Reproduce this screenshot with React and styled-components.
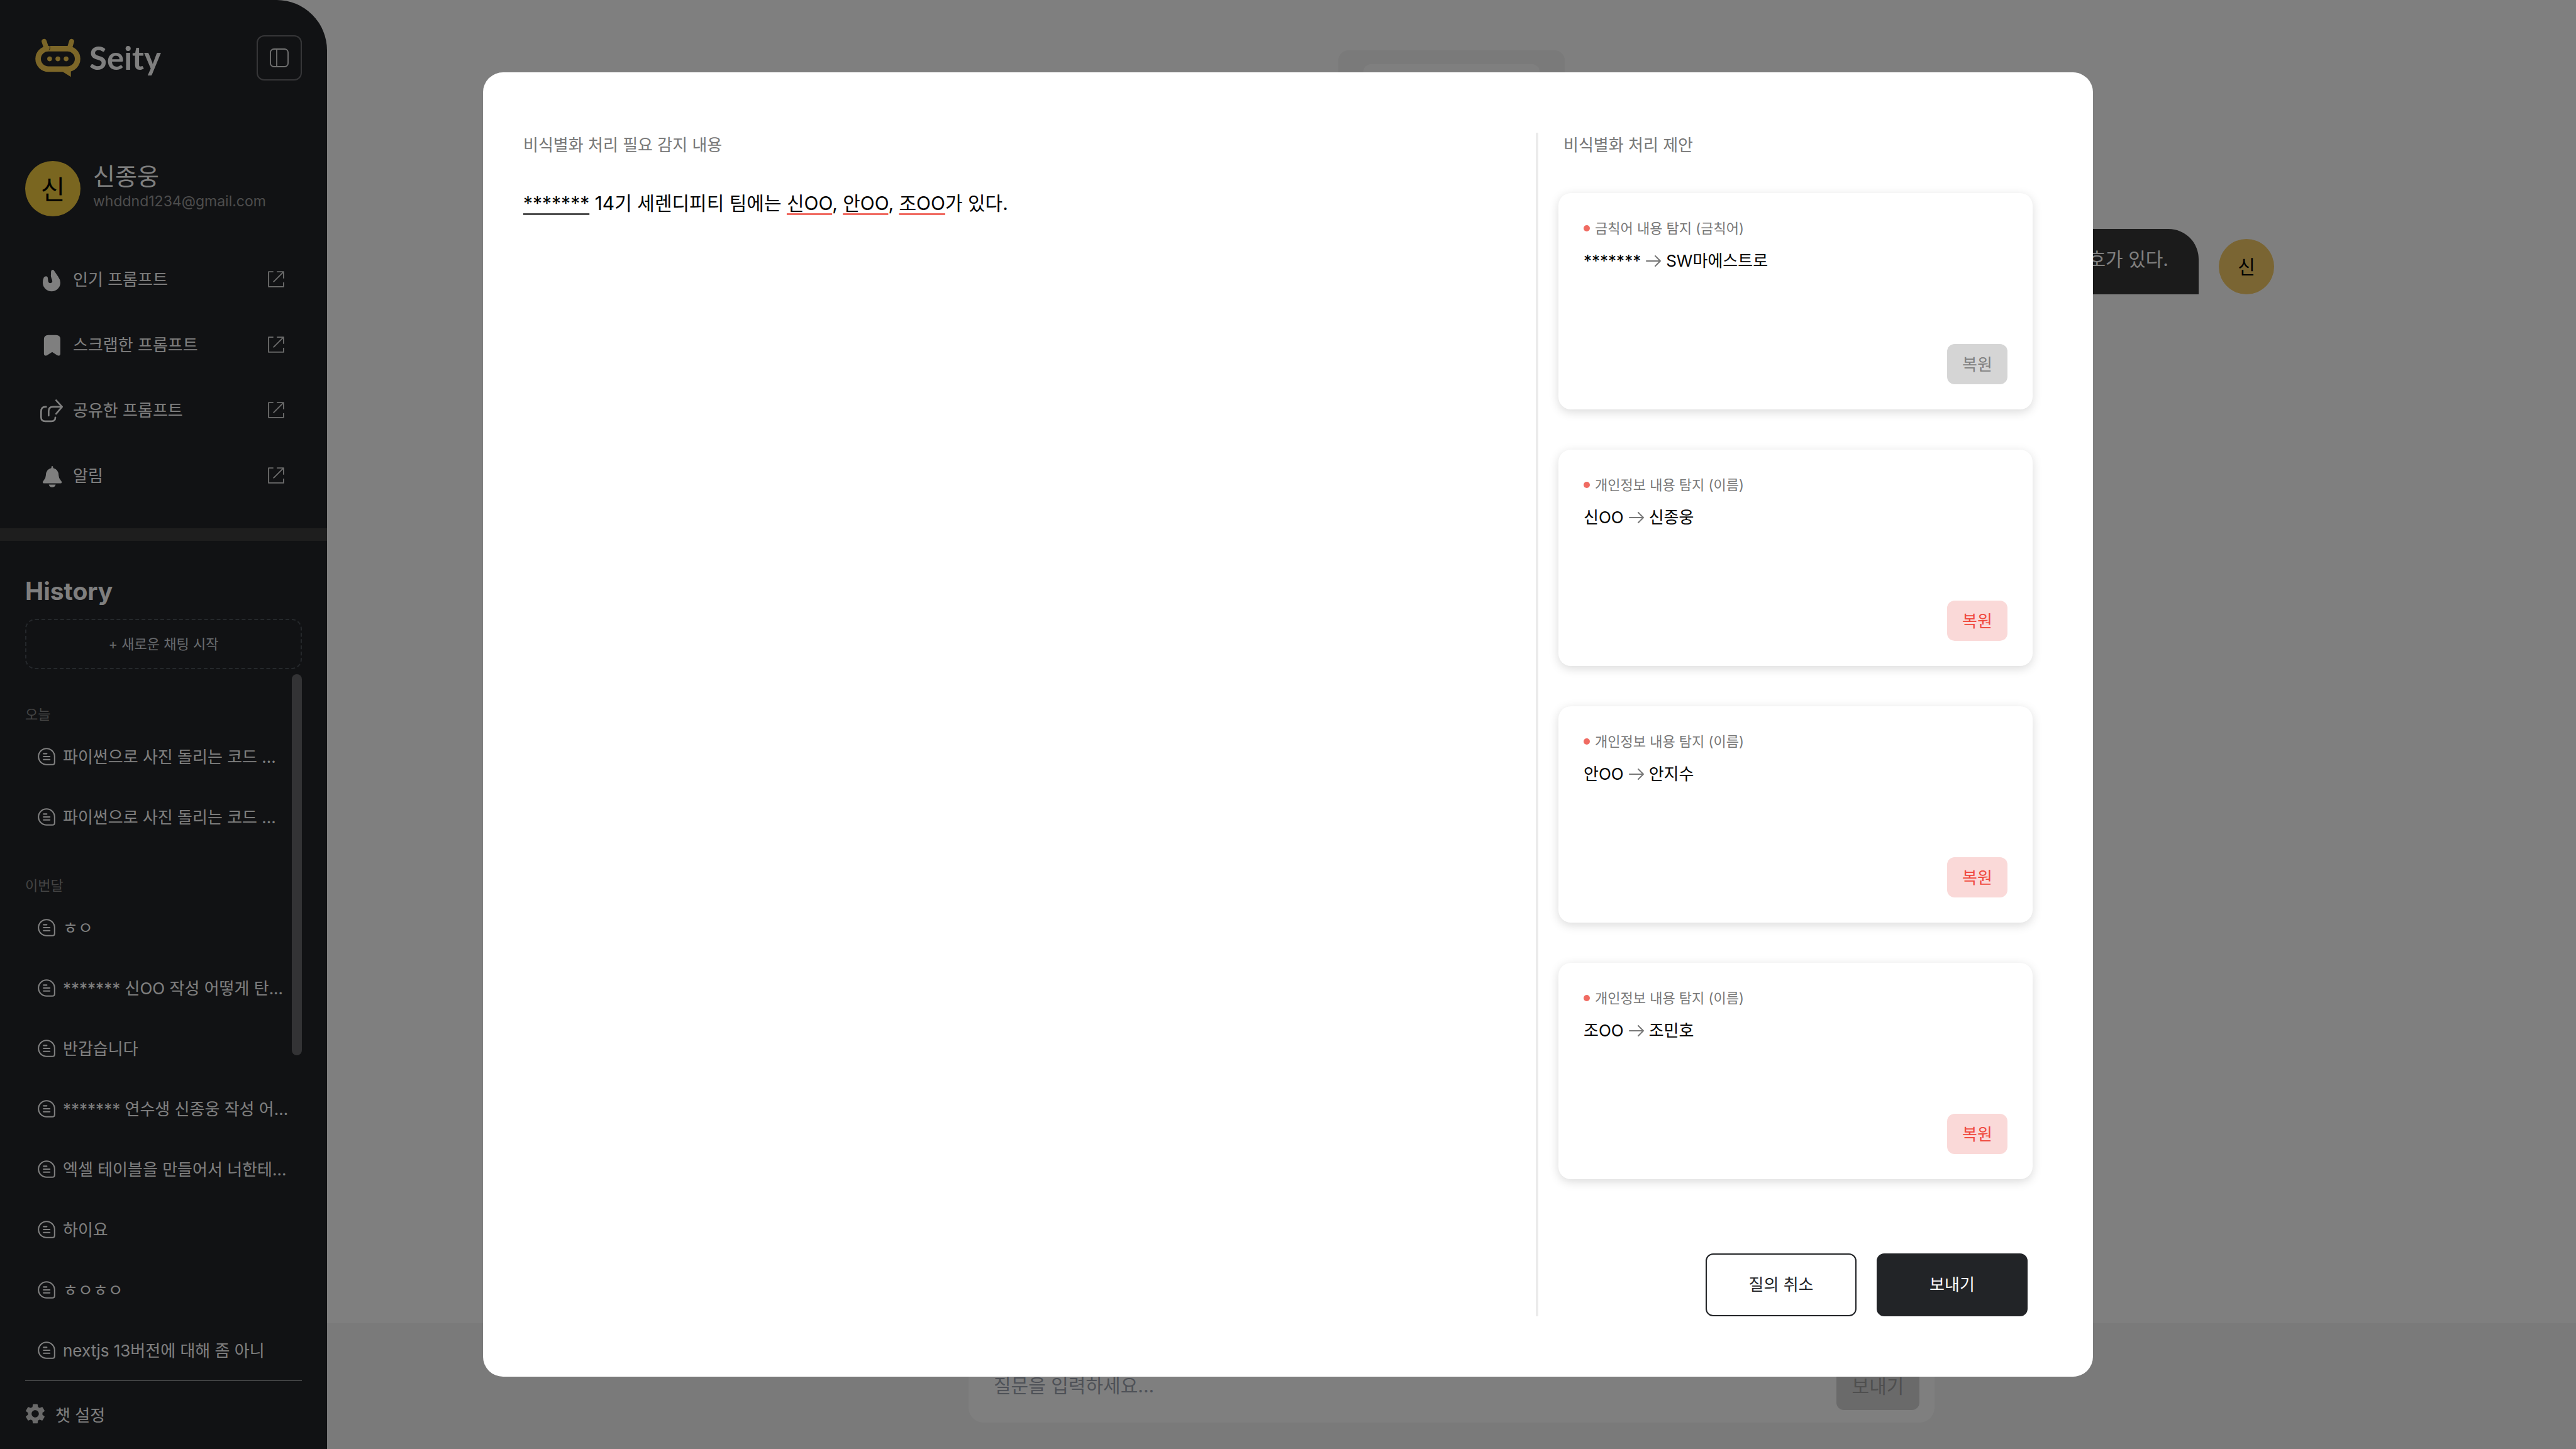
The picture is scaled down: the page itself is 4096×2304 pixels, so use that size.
import React from "react";
import styled, { createGlobalStyle } from "styled-components";
import { MdSettings } from "react-icons/md";

const GlobalStyle = createGlobalStyle`
  *, *::before, *::after { box-sizing: border-box; }
  body {
    margin: 0;
    background: #ffffff;
    font-family: Inter, "Noto Sans CJK KR", sans-serif;
    color: #000000;
  }
  button, input { font-family: inherit; }
  h1, h2, h3, p, ul { margin: 0; padding: 0; }
  ul { list-style: none; }
`;

const Page = styled.div`
  display: flex;
  height: 100vh;
  overflow: hidden;
`;

/* Hangul sits low in the Inter line box, so button labels get a little room below. */
const Button = styled.button`
  padding: 0 0 4px;
  border: 0;
  border-radius: 12px;
  font-size: 26px;
`;

/* ---------- sidebar ---------- */

const Sidebar = styled.aside`
  display: flex;
  flex-direction: column;
  flex: 0 0 520px;
  background: #222428;
  border-top-right-radius: 80px;
  color: #ffffff;
`;

const SidebarTop = styled.div`
  padding: 56px 40px 32px;
`;

const LogoRow = styled.div`
  display: flex;
  align-items: center;
  justify-content: space-between;
  padding-left: 16px;
`;

const Logo = styled.a`
  display: flex;
  align-items: center;
  gap: 14px;
  color: #ffffff;
  text-decoration: none;
  font-family: Lato, sans-serif;
  font-weight: 700;
  font-size: 51px;
  line-height: 72px;
`;

const ToggleButton = styled.button`
  display: flex;
  align-items: center;
  justify-content: center;
  width: 72px;
  height: 72px;
  padding: 0;
  border: 2px solid #6c6c70;
  border-radius: 12px;
  background: transparent;
  color: #e0e0e0;
`;

const Profile = styled.div`
  display: flex;
  align-items: center;
  gap: 20px;
  margin-top: 128px;
`;

const Avatar = styled.div`
  display: flex;
  align-items: center;
  justify-content: center;
  flex: none;
  width: 88px;
  height: 88px;
  padding-bottom: 4px;
  border-radius: 50%;
  background: ${(p) => p.$bg};
  color: #000000;
  font-size: ${(p) => p.$size}px;
`;

const ProfileText = styled.div`
  display: flex;
  flex-direction: column;
  padding-bottom: 8px;
`;

const ProfileName = styled.strong`
  font-size: 38px;
  line-height: 48px;
  font-weight: 400;
`;

const ProfileMail = styled.span`
  font-size: 23px;
  line-height: 32px;
  color: #9a9a9a;
`;

const Menu = styled.ul`
  margin-top: 48px;
`;

const MenuLink = styled.a`
  display: flex;
  align-items: center;
  gap: 16px;
  height: 104px;
  padding: 0 28px 0 24px;
  color: #ffffff;
  text-decoration: none;
  font-size: 26px;
`;

const MenuLabel = styled.span`
  flex: 1;
  padding-bottom: 4px;
`;

const Band = styled.div`
  height: 20px;
  background: #3c3c3c;
`;

const History = styled.section`
  display: flex;
  flex-direction: column;
  flex: 1;
  min-height: 0;
  padding: 56px 40px 0;
`;

const HistoryTitle = styled.h2`
  font-size: 39px;
  line-height: 48px;
  font-weight: 700;
`;

const NewChat = styled(Button)`
  flex: none;
  height: 80px;
  margin: 20px 0 8px;
  border: 2px dashed #4b5057;
  border-radius: 16px;
  background: transparent;
  color: #d1d5db;
  font-size: 22px;
`;

const HistoryScroll = styled.div`
  display: flex;
  flex: 1;
  min-height: 0;
`;

const HistoryList = styled.div`
  display: flex;
  flex-direction: column;
  flex: 1;
  gap: 42px;
  min-width: 0;
  padding-top: 45px;
  overflow: hidden;
`;

const ScrollThumb = styled.div`
  flex: 0 0 16px;
  height: 54%;
  border-radius: 8px;
  background: #66666a;
`;

const GroupTitle = styled.h3`
  font-size: 22px;
  line-height: 38px;
  font-weight: 400;
  color: #888888;
`;

const HistoryLink = styled.a`
  display: flex;
  align-items: center;
  gap: 12px;
  height: 96px;
  padding-left: 20px;
  color: #ffffff;
  text-decoration: none;
  font-size: 26px;
  white-space: nowrap;
`;

const HistoryName = styled.span`
  padding-bottom: 4px;
`;

const SidebarFooter = styled.footer`
  flex: none;
  margin: 0 40px;
  border-top: 2px solid #808284;
`;

const SettingsButton = styled(Button)`
  display: flex;
  align-items: center;
  gap: 16px;
  width: 100%;
  height: 108px;
  background: transparent;
  color: #ffffff;

  svg { color: #d4d4d4; }
`;

/* ---------- main area ---------- */

const Main = styled.main`
  display: flex;
  flex-direction: column;
  align-items: center;
  flex: 1;
  min-width: 0;
  padding-top: 80px;
`;

const TabBox = styled.div`
  flex: none;
  width: 360px;
  padding: 22px 40px;
  border-radius: 16px;
  background: #f4f4f4;
`;

const TabInner = styled.div`
  height: 76px;
  border-radius: 12px;
  background: #ffffff;
`;

const Chat = styled.div`
  flex: 1;
  width: 100%;
  max-width: 2616px;
  padding-top: 164px;
`;

const MessageRow = styled.div`
  display: flex;
  align-items: flex-end;
  justify-content: flex-end;
  gap: 32px;
`;

const Bubble = styled.p`
  padding: 28px 48px 36px;
  border-radius: 48px 48px 0 48px;
  background: #363636;
  color: #ffffff;
  font-size: 30px;
  line-height: 40px;
`;

const Composer = styled.form`
  display: flex;
  justify-content: center;
  width: 100%;
  padding: 42px;
  background: #f4f4f4;
`;

const ComposerBox = styled.div`
  display: flex;
  align-items: center;
  width: 100%;
  max-width: 1536px;
  padding: 20px 24px 20px 40px;
  border-radius: 24px;
  background: #ffffff;
`;

const ComposerInput = styled.input`
  flex: 1;
  min-width: 0;
  height: 76px;
  padding: 0 0 2px;
  border: 0;
  outline: 0;
  background: transparent;
  font-size: 30px;

  &::placeholder { color: #9ca3af; opacity: 1; }
`;

const ComposerSend = styled(Button)`
  width: 132px;
  height: 76px;
  background: #d4d4d4;
  color: #9e9e9e;
  font-size: 30px;
`;

/* ---------- dialog ---------- */

const Overlay = styled.div`
  position: fixed;
  inset: 0;
  display: flex;
  align-items: center;
  justify-content: center;
  background: rgba(0, 0, 0, 0.5);
`;

const Dialog = styled.div`
  display: flex;
  width: 100%;
  max-width: 2560px;
  height: 90%;
  padding: 96px 96px 96px 64px;
  border-radius: 32px;
  background: #ffffff;
`;

const Detected = styled.section`
  flex: 1;
  min-width: 0;
`;

const Suggestions = styled.section`
  display: flex;
  flex-direction: column;
  flex: 0 0 790px;
  padding-left: 32px;
  border-left: 4px solid #ebebeb;
`;

const PaneTitle = styled.h2`
  padding-left: ${(p) => p.$indent || 0}px;
  font-size: 26px;
  line-height: 40px;
  font-weight: 400;
  color: #777777;
`;

const Sentence = styled.p`
  margin-top: 52px;
  font-size: 30px;
  line-height: 40px;
`;

const Mark = styled.mark`
  background: transparent;
  color: inherit;
  text-decoration: underline 3px ${(p) => (p.$banned ? "#4f4f4f" : "#f06b62")};
  text-underline-offset: 5px;
  text-decoration-skip-ink: none;
`;

const CardList = styled.ul`
  display: flex;
  flex-direction: column;
  gap: 64px;
  margin-top: 56px;
`;

const Card = styled.li`
  display: flex;
  flex-direction: column;
  height: 344px;
  padding: 40px;
  border-radius: 20px;
  background: #ffffff;
  box-shadow: 0 4px 16px rgba(0, 0, 0, 0.15);
`;

const CardKind = styled.h3`
  display: flex;
  align-items: center;
  gap: 8px;
  font-size: 22px;
  line-height: 32px;
  font-weight: 400;
  color: #777777;

  &::before {
    content: "";
    width: 10px;
    height: 10px;
    border-radius: 50%;
    background: #f06b62;
  }
`;

const Change = styled.p`
  display: flex;
  align-items: center;
  gap: 8px;
  margin-top: 16px;
  font-size: 26px;
  line-height: 40px;

  svg { color: #777777; }
`;

const RestoreButton = styled(Button)`
  align-self: flex-end;
  width: 96px;
  height: 64px;
  margin-top: auto;
  background: #fad9d8;
  color: #f0493e;

  &:disabled {
    background: #d5d5d5;
    color: #808080;
  }
`;

const Actions = styled.div`
  display: flex;
  justify-content: flex-end;
  gap: 32px;
  margin-top: auto;
  padding-right: 8px;
`;

const ActionButton = styled(Button)`
  width: 240px;
  height: 100px;
  border: 2px solid #222427;
  background: ${(p) => (p.$primary ? "#222427" : "#ffffff")};
  color: ${(p) => (p.$primary ? "#ffffff" : "#222427")};
`;

/* ---------- drawings ---------- */

const LogoMark = () => (
  <svg width="72" height="62" viewBox="70 75 90 78" aria-hidden="true">
    <g fill="none" stroke="#f8cc50" strokeLinecap="round">
      <path d="M87.5 81 L92.5 96 M142.5 81 L138 96" strokeWidth="10" />
      <rect x="75.5" y="95.5" width="79" height="41" rx="20.5" strokeWidth="11" />
    </g>
    <path d="M122 140 L141 152 V137 Z" fill="#f8cc50" />
    <path d="M98.5 89 Q100.5 96 97 99" fill="none" stroke="#222428" strokeWidth="1.2" />
    <g fill="#f8cc50">
      <circle cx="98.5" cy="116" r="4.8" />
      <circle cx="115" cy="116" r="4.8" />
      <circle cx="131.5" cy="116" r="4.8" />
    </g>
  </svg>
);

const PanelIcon = () => (
  <svg width="30" height="30" viewBox="0 0 38 38" fill="none" stroke="currentColor" strokeWidth="2.4" aria-hidden="true">
    <rect x="1.2" y="1.2" width="35.6" height="35.6" rx="7" />
    <path d="M14 1 V37" />
  </svg>
);

const MENU_PATHS = {
  flame: (
    <path
      fill="currentColor"
      d="M64 40Q62 19 75 19Q80 19 84 26L107 60Q120 78 120 96A52.5 51 0 0 1 15 96Q15 76 22 63Q27 57 35 57Q44 57 45 67Q46 80 48 90Q50 98 58 98Q70 98 72 88Q72 80 67 70Q61 56 64 40Z"
    />
  ),
  bookmark: (
    <path
      fill="currentColor"
      d="M22 44Q22 18 48 18H94Q120 18 120 44V128Q120 141 108 141Q104 141 100 138L71 119L42 138Q38 141 34 141Q22 141 22 128Z"
    />
  ),
  share: (
    <path
      fill="none"
      stroke="currentColor"
      strokeWidth="10"
      strokeLinecap="round"
      strokeLinejoin="round"
      d="M35 56H30Q5 56 5 85V117Q5 142 30 142H66Q90 142 90 119M50 108V82Q50 56 76 56H130M95 17L130 56L95 97"
    />
  ),
  bell: (
    <path
      fill="currentColor"
      d="M71 19Q77 19 77 31Q109 38 110 76Q110 92 122 104Q128 110 128 116Q128 122 121 122H22Q15 122 15 116Q15 110 21 104Q33 92 33 76Q34 38 66 31Q66 19 71 19ZM51 129H92Q88 145 71 145Q55 145 51 129Z"
    />
  ),
};

const MenuIcon = ({ name }) => (
  <svg width="36" height="40" viewBox="0 0 135 150" aria-hidden="true">
    {MENU_PATHS[name]}
  </svg>
);

const ExternalIcon = () => (
  <svg width="26" height="26" viewBox="0 0 33 33" fill="none" stroke="#d6d6d6" strokeWidth="2.4" aria-hidden="true">
    <path d="M11 1.4H1.4V31.6H31.6V23M18 1.4H31.6V15M11 22L31 2" strokeLinejoin="round" />
  </svg>
);

const NoteIcon = () => (
  <svg width="28" height="28" viewBox="0 0 35 35" fill="none" stroke="currentColor" strokeWidth="2.6" strokeLinecap="round" aria-hidden="true">
    <path d="M17.5 1.5A16 16 0 1 0 17.5 33.5H29Q33.5 33.5 33.5 29V17.5A16 16 0 0 0 17.5 1.5Z" />
    <path d="M11.5 11.7H18M11.5 17.6H24M11.5 23.4H24" />
  </svg>
);

const ArrowIcon = () => (
  <svg width="24" height="18" viewBox="0 0 24 18" fill="none" stroke="currentColor" strokeWidth="2" strokeLinecap="round" strokeLinejoin="round" aria-hidden="true">
    <path d="M1 9H23M15 1L23 9L15 17" />
  </svg>
);

/* ---------- data ---------- */

const menu = [
  ["flame", "인기 프롬프트"],
  ["bookmark", "스크랩한 프롬프트"],
  ["share", "공유한 프롬프트"],
  ["bell", "알림"],
];

const groups = [
  ["오늘", ["파이썬으로 사진 돌리는 코드 ...", "파이썬으로 사진 돌리는 코드 ..."]],
  [
    "이번달",
    [
      "ㅎㅇ",
      "******* 신OO 작성 어떻게 탄...",
      "반갑습니다",
      "******* 연수생 신종웅 작성 어...",
      "엑셀 테이블을 만들어서 너한테...",
      "하이요",
      "ㅎㅇㅎㅇ",
      "nextjs 13버전에 대해 좀 아니",
    ],
  ],
];

const suggestions = [
  { kind: "금칙어 내용 탐지 (금칙어)", from: "*******", to: "SW마에스트로", disabled: true },
  { kind: "개인정보 내용 탐지 (이름)", from: "신OO", to: "신종웅" },
  { kind: "개인정보 내용 탐지 (이름)", from: "안OO", to: "안지수" },
  { kind: "개인정보 내용 탐지 (이름)", from: "조OO", to: "조민호" },
];

export default function App() {
  return (
    <>
      <GlobalStyle />
      <Page>
        <Sidebar>
          <SidebarTop>
            <LogoRow>
              <Logo href="#home">
                <LogoMark />
                Seity
              </Logo>
              <ToggleButton type="button" aria-label="사이드바 접기">
                <PanelIcon />
              </ToggleButton>
            </LogoRow>
            <Profile>
              <Avatar $bg="#f4cc40" $size={42}>신</Avatar>
              <ProfileText>
                <ProfileName>신종웅</ProfileName>
                <ProfileMail>whddnd1234@gmail.com</ProfileMail>
              </ProfileText>
            </Profile>
            <Menu>
              {menu.map(([icon, label]) => (
                <li key={icon}>
                  <MenuLink href={`#${icon}`}>
                    <MenuIcon name={icon} />
                    <MenuLabel>{label}</MenuLabel>
                    <ExternalIcon />
                  </MenuLink>
                </li>
              ))}
            </Menu>
          </SidebarTop>
          <Band />
          <History>
            <HistoryTitle>History</HistoryTitle>
            <NewChat type="button">+ 새로운 채팅 시작</NewChat>
            <HistoryScroll>
              <HistoryList>
                {groups.map(([title, chats]) => (
                  <section key={title}>
                    <GroupTitle>{title}</GroupTitle>
                    <ul>
                      {chats.map((chat, i) => (
                        <li key={i}>
                          <HistoryLink href={`#chat-${i}`}>
                            <NoteIcon />
                            <HistoryName>{chat}</HistoryName>
                          </HistoryLink>
                        </li>
                      ))}
                    </ul>
                  </section>
                ))}
              </HistoryList>
              <ScrollThumb />
            </HistoryScroll>
          </History>
          <SidebarFooter>
            <SettingsButton type="button">
              <MdSettings size={32} viewBox="2 2 20 20" />
              챗 설정
            </SettingsButton>
          </SidebarFooter>
        </Sidebar>

        <Main>
          <TabBox>
            <TabInner />
          </TabBox>
          <Chat>
            <MessageRow>
              <Bubble>조민호가 있다.</Bubble>
              <Avatar $bg="#f4ca66" $size={30}>신</Avatar>
            </MessageRow>
          </Chat>
          <Composer>
            <ComposerBox>
              <ComposerInput type="text" aria-label="질문" placeholder="질문을 입력하세요..." />
              <ComposerSend type="button">보내기</ComposerSend>
            </ComposerBox>
          </Composer>
        </Main>
      </Page>

      <Overlay>
        <Dialog role="dialog" aria-modal="true" aria-label="비식별화 처리">
          <Detected>
            <PaneTitle>비식별화 처리 필요 감지 내용</PaneTitle>
            <Sentence>
              <Mark $banned>*******</Mark> 14기 세렌디피티 팀에는 <Mark>신OO</Mark>, <Mark>안OO</Mark>,{" "}
              <Mark>조OO</Mark>가 있다.
            </Sentence>
          </Detected>
          <Suggestions>
            <PaneTitle $indent={8}>비식별화 처리 제안</PaneTitle>
            <CardList>
              {suggestions.map((s) => (
                <Card key={s.from}>
                  <CardKind>{s.kind}</CardKind>
                  <Change>
                    <span>{s.from}</span>
                    <ArrowIcon />
                    <span>{s.to}</span>
                  </Change>
                  <RestoreButton type="button" disabled={s.disabled}>
                    복원
                  </RestoreButton>
                </Card>
              ))}
            </CardList>
            <Actions>
              <ActionButton type="button">질의 취소</ActionButton>
              <ActionButton type="button" $primary>
                보내기
              </ActionButton>
            </Actions>
          </Suggestions>
        </Dialog>
      </Overlay>
    </>
  );
}
